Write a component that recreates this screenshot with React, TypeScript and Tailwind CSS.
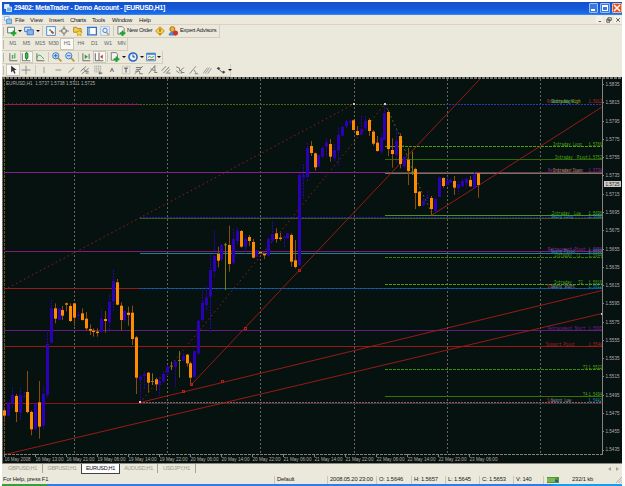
import type { ReactNode } from 'react';
import clsx from 'clsx';

type Bar = [number, number, number, number, ('o' | 'b' | 'y')];

// body top, body bottom, wick top, wick bottom (in thirds of a pixel), colour
const lower: Bar[] = [
  [421, 437, 413, 455, 'o'], [397, 437, 397, 443, 'b'], [375, 400, 352, 412, 'b'], [378, 426, 372, 456, 'o'],
  [375, 428, 353, 450, 'b'], [379, 382, 366, 384, 'b'], [366, 426, 303, 430, 'o'], [426, 478, 422, 496, 'o'],
  [402, 478, 400, 480, 'b'], [397, 470, 333, 506, 'o'], [372, 467, 350, 478, 'b'], [222, 375, 178, 383, 'b'],
  [115, 218, 88, 222, 'b'], [115, 146, 100, 160, 'o'], [115, 150, 115, 150, 'b'], [120, 137, 108, 150, 'o'],
  [100, 104, 98, 124, 'o'], [108, 153, 100, 156, 'o'], [100, 143, 98, 168, 'o'], [134, 138, 125, 150, 'b'],
  [130, 150, 115, 152, 'o'], [146, 175, 126, 182, 'o'], [177, 182, 163, 195, 'o'], [182, 186, 175, 200, 'o'],
  [185, 189, 175, 200, 'o'], [146, 185, 118, 190, 'b'], [147, 153, 123, 188, 'o'], [95, 156, 75, 185, 'b'],
  [33, 95, 0, 125, 'b'], [37, 104, 27, 106, 'o'], [107, 150, 97, 182, 'o'], [122, 150, 122, 154, 'b'],
  [128, 135, 110, 167, 'o'], [128, 207, 107, 225, 'o'], [202, 323, 198, 372, 'o'], [320, 330, 315, 395, 'b'],
  [312, 318, 305, 360, 'b'], [308, 338, 306, 368, 'o'], [333, 336, 310, 345, 'y'], [328, 343, 323, 362, 'o'],
  [333, 345, 320, 378, 'b'], [312, 335, 305, 340, 'b'], [290, 308, 285, 320, 'b'], [287, 290, 275, 300, 'y'],
  [275, 290, 272, 350, 'b'], [270, 273, 243, 323, 'y'], [257, 272, 250, 273, 'b'], [254, 280, 252, 290, 'o'],
  [280, 323, 275, 348, 'o'], [243, 322, 243, 322, 'b'], [153, 250, 148, 255, 'b'], [98, 150, 62, 155, 'b'],
  [83, 105, 50, 123, 'b'], [0, 80, -45, 188, 'b'],
];
const upper: Bar[] = [
  [543, 590, 467, 607, 'b'], [537, 557, 515, 577, 'o'], [510, 553, 507, 556, 'b'], [508, 511, 503, 645, 'y'],
  [510, 567, 452, 590, 'o'], [492, 563, 462, 568, 'b'], [467, 498, 457, 508, 'b'], [468, 515, 465, 518, 'o'],
  [492, 515, 480, 535, 'b'], [486, 498, 480, 513, 'o'], [501, 548, 492, 550, 'o'], [527, 545, 525, 547, 'b'],
  [531, 534, 528, 536, 'o'], [537, 541, 533, 552, 'o'], [492, 542, 488, 544, 'b'], [477, 497, 440, 500, 'b'],
  [475, 492, 460, 503, 'o'], [488, 492, 473, 497, 'o'], [486, 489, 483, 517, 'b'], [475, 490, 473, 492, 'b'],
  [480, 560, 475, 575, 'o'], [556, 576, 495, 580, 'o'], [300, 570, 296, 575, 'b'], [300, 308, 267, 370, 'b'],
  [219, 306, 204, 318, 'b'], [213, 234, 198, 243, 'o'], [235, 277, 233, 287, 'o'], [240, 275, 240, 275, 'b'],
  [218, 245, 215, 250, 'b'], [202, 215, 190, 245, 'b'], [207, 245, 192, 260, 'o'], [225, 250, 207, 258, 'b'],
  [180, 227, 158, 272, 'b'], [156, 182, 153, 183, 'b'], [139, 154, 135, 158, 'b'], [139, 143, 135, 153, 'b'],
  [136, 165, 134, 166, 'o'], [168, 180, 153, 182, 'o'], [163, 178, 123, 180, 'b'], [138, 160, 123, 165, 'b'],
  [135, 168, 130, 183, 'o'], [170, 206, 165, 212, 'o'], [203, 228, 183, 230, 'o'], [189, 230, 175, 238, 'b'],
  [114, 195, 88, 197, 'b'], [111, 222, 105, 243, 'o'], [225, 237, 190, 278, 'o'], [198, 240, 165, 260, 'b'],
  [183, 267, 175, 280, 'o'], [246, 275, 246, 277, 'b'], [254, 288, 218, 330, 'o'], [290, 293, 230, 300, 'y'],
  [282, 354, 278, 402, 'o'], [350, 393, 348, 395, 'o'], [377, 390, 370, 393, 'b'], [365, 370, 348, 378, 'b'],
  [369, 402, 363, 422, 'o'], [372, 408, 370, 410, 'b'], [307, 366, 305, 368, 'b'], [309, 333, 307, 338, 'o'],
  [318, 330, 305, 335, 'b'], [314, 322, 312, 324, 'b'], [318, 338, 303, 360, 'o'], [327, 340, 318, 357, 'b'],
  [318, 333, 312, 336, 'b'], [312, 325, 308, 338, 'b'], [315, 334, 303, 336, 'o'], [298, 338, 290, 342, 'b'],
  [295, 330, 295, 368, 'o'],
];
const shift = (rows: Bar[], base: number) =>
  rows.map(([a, b, c, d, k]) => [base + a / 3, base + b / 3, base + c / 3, base + d / 3, k] as Bar);
const bars = [...shift(lower, 270), ...shift(upper, 75)];

const fills = { o: '#ff8c00', b: '#2c00b4', y: '#a07a10' };
const wicks = { o: '#8c4c08', b: '#2c00b4', y: '#7c7410' };

// x from, x to, y, colour, dash
const levels: [number, number, number, string, string?][] = [
  [4, 140, 104, '#96203f'], [4, 140, 103, '#551a70', '1 3'],
  [140, 446, 104, '#4c6414', '2 1'], [446, 602, 104, '#2c3cb0', '2 1'],
  [4, 602, 172, '#8a1c96'], [385, 602, 173, '#589018'],
  [385, 602, 146, '#46a00c', '3 1'], [385, 602, 159, '#2f6a00'],
  [140, 602, 218, '#39551c'], [140, 602, 217, '#2a1cb0', '2 1'], [385, 602, 215, '#48960c'],
  [4, 602, 251, '#861a78'], [140, 602, 253, '#267c9c'], [385, 602, 257, '#3c7c06', '3 1'],
  [385, 602, 284, '#46a00c', '3 1'],
  [4, 140, 288, '#981c1c'], [140, 602, 288, '#0c4cc8'], [140, 602, 288, '#17802c', '1 3'],
  [4, 602, 330, '#661a80'], [4, 602, 346, '#981818'],
  [385, 602, 369, '#3f8c06', '3 1'], [385, 602, 396, '#387404'],
  [4, 602, 403, '#8c1414'], [140, 602, 402, '#14909a', '2 1'],
];

// y, start x, name, price, colour
const tags: [number, number, string, string, string][] = [
  [104, 547, 'Resistance High', '1.5812', '#c02828'],
  [104, 551, 'Swing High', '', '#2898b8'],
  [104, 552, 'Intraday High', '', '#54b414'],
  [147, 553, 'Intraday Long', '1.5766', '#54b414'],
  [160, 555, 'Intraday  Pivot', '1.5752', '#54b414'],
  [173, 548, 'Retracement Long', '1.5738', '#9c24a8'],
  [173, 553, 'Intraday Down', '', '#8c9434'],
  [216, 552, 'Intraday  Low', '1.5696', '#54b414'],
  [219, 551, 'Swing Long', '1.5690', '#2898b8'],
  [252, 548, 'Retracement Pivot', '1.5650', '#9c24a8'],
  [254, 551, 'Swing Pivot', '1.5650', '#2898b8'],
  [258, 554, 'Intraday  T1', '1.5644', '#48980e'],
  [285, 554, 'Intraday   T2', '1.5616', '#54b414'],
  [289, 547, 'Support High', '', '#c02828'],
  [289, 551, 'Swing Short', '1.5612', '#2898b8'],
  [331, 548, 'Retracement Short', '1.5565', '#7c2090'],
  [347, 546, 'Support Pivot', '1.5548', '#b82020'],
  [370, 583, 'T3', '1.5522', '#54b414'],
  [397, 583, 'T4', '1.5494', '#54b414'],
  [403, 547, 'Support Low', '', '#c02828'],
  [403, 551, 'Swing Low', '1.5482', '#2898b8'],
];

const times = [
  '16 May 2008', '16 May 13:00', '16 May 21:00', '19 May 06:00', '19 May 14:00', '19 May 22:00', '20 May 06:00', '20 May 14:00',
  '20 May 22:00', '21 May 06:00', '21 May 14:00', '21 May 22:00', '22 May 06:00', '22 May 14:00', '22 May 22:00', '23 May 06:00',
];
const prices = Array.from({ length: 21 }, (_, i) => (1.5835 - i * 0.002).toFixed(4));

function Chart() {
  return (
    <svg width="620" height="386" viewBox="2 77 620 386" className="block bg-[#05120f] font-['Liberation_Sans',sans-serif]">
      <path d="M2 78h620" stroke="#77736c" strokeWidth="2" strokeDasharray="3 1" />
      <path d="M2.5 77v386" stroke="#77736c" />
      {[4, 74, 167, 260, 354, 447, 540].map((x) => (
        <path key={x} d={`M${x + 0.5} 79V454`} stroke={x === 4 ? '#6c5420' : '#6a635d'} strokeDasharray={x === 4 ? '3 1' : '2 2'} />
      ))}
      {levels.map(([x1, x2, y, c, dash], i) => (
        <path key={i} d={`M${x1} ${y + 0.5}H${x2}`} stroke={c} strokeDasharray={dash} />
      ))}
      <g fill="none" stroke="#a81c18" strokeWidth="0.9">
        <path d="M4 290L354 104M140 403L385 104" strokeDasharray="1.5 3" />
        <path d="M191 385L480 79M432 215L602 107M140 402.5L602 290.5M5 454.5L602 313.5" />
      </g>
      <path d="M385 104L399 134L415 177L432 214" fill="none" stroke="#4c8414" strokeDasharray="1.5 3" />
      {bars.map(([t, b, wt, wb, k], i) => {
        const x = Math.round(4.2 + i * 3.88);
        return (
          <g key={i}>
            <path d={`M${x + 0.5} ${wt}V${wb}`} stroke={wicks[k]} strokeDasharray={k === 'b' ? '2 1' : undefined} />
            <rect x={x - 1} y={t} width="3" height={Math.max(1, b - t)} fill={fills[k]} />
          </g>
        );
      })}
      <g fill="none" stroke="#b42018">
        {[[299, 271], [245, 329], [191, 385], [183, 392], [222, 382]].map(([x, y]) => (
          <rect key={x} x={x - 0.5} y={y - 1.5} width="2" height="2" />
        ))}
      </g>
      {[[353, 103], [384, 103], [139, 401], [601, 313]].map(([x, y]) => (
        <rect key={x} x={x} y={y} width="2" height="2" fill="#d8c8c8" />
      ))}
      {tags.map(([y, x, name, price, c], i) => (
        <g key={i} fill={c} fontSize="5" className="font-['Liberation_Mono',monospace]">
          <text x={x} y={y - 1.2} textLength={name.length * 2.2} lengthAdjust="spacingAndGlyphs" className="whitespace-pre">{name}</text>
          {price && <text x="588.5" y={y - 1.2} textLength="13.5" lengthAdjust="spacingAndGlyphs">{price}</text>}
        </g>
      ))}
      <path d="M4 454.5H602" stroke="#8a8072" strokeDasharray="3 1" />
      <path d="M602.5 79V455" stroke="#8a7f82" />
      <g fill="#b8acae" fontSize="5.2">
        <text x="6" y="85" textLength="89" lengthAdjust="spacingAndGlyphs" className="whitespace-pre">EURUSD,H1  1.5737 1.5738 1.5711 1.5725</text>
        {prices.map((p, i) => {
          const y = 84 + i * 18.28;
          return (
            <g key={p}>
              <path d={`M602 ${Math.round(y) + 0.5}h2`} stroke="#8a7f82" />
              {i < 20 && <text x="605.5" y={y + 2} textLength="14" lengthAdjust="spacingAndGlyphs">{p}</text>}
              {i === 20 && <text x="605.5" y={y + 1.5} textLength="14" lengthAdjust="spacingAndGlyphs">{p}</text>}
            </g>
          );
        })}
        {times.map((t, i) => (
          <g key={t}>
            <path d={`M${Math.round(4 + i * 31)}.5 454v3`} stroke="#8a7f82" />
            <text x={4.5 + i * 31} y="461.2" textLength={i ? 28 : 26} lengthAdjust="spacingAndGlyphs">{t}</text>
          </g>
        ))}
      </g>
      <rect x="604" y="181" width="17" height="6" fill="#cfcac8" />
      <text x="605.5" y="186" fontSize="5" fill="#222" textLength="14" lengthAdjust="spacingAndGlyphs">1.5725</text>
    </svg>
  );
}

function Icon({ children, size = 'w-[10px] h-[10px]' }: { children: ReactNode; size?: string }) {
  return (
    <svg viewBox="0 0 16 16" className={clsx('shrink-0', size)} fill="none" strokeWidth="1.5">
      {children}
    </svg>
  );
}

function Slot({ w = 'w-[13.6px]', pressed, children }: { w?: string; pressed?: boolean; children?: ReactNode }) {
  return (
    <span className={clsx('h-[12px] shrink-0 flex items-center justify-center', w, pressed && 'bg-[#faf9f5] border border-[#cbc7bb]')}>
      {children}
    </span>
  );
}

const Sep = ({ w = 'w-[3px]' }: { w?: string }) => (
  <span className={clsx('flex justify-center shrink-0', w)}><span className="w-px h-[10px] bg-[#cdc8b9]" /></span>
);

const Caret = ({ w = 'w-[5px]' }: { w?: string }) => (
  <span className={clsx('flex justify-center shrink-0', w)}>
    <svg viewBox="0 0 4 2" className="w-[4px] h-[2px]"><path d="M0 0h4L2 2z" fill="#111" /></svg>
  </span>
);

function Strip({ w, children }: { w: string; children: ReactNode }) {
  return (
    <div className={clsx('h-[13px] flex items-center border-r border-b border-[#d8cdb8] pl-[1px]', w)}>
      <span className="w-px h-[9px] bg-[#bdb8aa] mr-[2px] shrink-0" />
      {children}
    </div>
  );
}

const plus = 'M9 7h3v3h3v3h-3v3H9v-3H6v-3h3z';

function Toolbars() {
  return (
    <div className="h-[52px] flex flex-col text-[6px] text-[#222]">
      <Strip w="w-[218px]">
        <Slot w="w-[11px]"><Icon><path d="M1 2h11v9H1z" fill="#fff" stroke="#4b7a66" /><path d={plus} fill="#16a42c" /></Icon></Slot>
        <Caret w="w-[6px]" />
        <Slot w="w-[12px]"><Icon><path d="M1 2h10v7H1z" fill="#dceafc" stroke="#3e76c4" /><path d="M5 6h10v8H5z" fill="#86b4ee" stroke="#3e76c4" /></Icon></Slot>
        <Caret w="w-[5px]" />
        <Sep w="w-[4px]" />
        <Slot><Icon><path d="M1 1h14v14H1z" fill="#f4faff" stroke="#4a8cd0" /><path d="M4 7l3-3 1 4z" fill="#20a040" /><path d="M8 8l4 4" stroke="#d04030" strokeWidth="3" /></Icon></Slot>
        <Slot><Icon><circle cx="8" cy="8" r="4" stroke="#777" /><path d="M8 0v6M8 10v6M0 8h6M10 8h6" stroke="#777" /></Icon></Slot>
        <Slot><Icon><path d="M1 2h5l1 2h6v6H1z" fill="#f4cc50" stroke="#b48a20" /><path d="M10 6l1.500 3 3.500.5-2.500 2.500.5 3.500-3-1.500-3 1.500.5-3.500L5 9.500 8.500 9z" fill="#f8dc38" stroke="#b48a20" strokeWidth="1" /></Icon></Slot>
        <Slot><Icon><path d="M1 2h14v12H1z" fill="#fff" stroke="#2c70c8" strokeWidth="2" /><path d="M1 3h4v10H1z" fill="#7caee8" /></Icon></Slot>
        <Slot><Icon><path d="M1 1h14v14H1z" fill="#e8f0fa" stroke="#a8c4e4" /><circle cx="8" cy="7" r="3.5" stroke="#4a7cb8" /><path d="M10 10l4 4" stroke="#c09040" strokeWidth="2" /></Icon></Slot>
        <Sep w="w-[4px]" />
        <Slot w="w-[10px]"><Icon><path d="M3 1h7l3 3v9H3z" fill="#f6f6f6" stroke="#777" /><path d={plus} fill="#16a42c" /></Icon></Slot>
        <span className="w-[27px] pl-px whitespace-nowrap text-[5.8px] tracking-[-0.3px]">New Order</span>
        <Slot w="w-[14px]"><Icon><path d="M8 1l7 7-7 7-7-7z" fill="#f6d04c" stroke="#b88c1c" /><path d="M8 4v5M8 11v2" stroke="#8c5c10" strokeWidth="2" /></Icon></Slot>
        <Slot w="w-[13px]"><Icon><circle cx="7" cy="5" r="4" fill="#e8b43c" stroke="#a87018" /><path d="M1 15c0-8 12-8 12 0z" fill="#4a88d0" /><circle cx="12" cy="11" r="4" fill="#d83020" /></Icon></Slot>
        <span className="whitespace-nowrap text-[5.8px] tracking-[-0.26px]">Expert Advisors</span>
      </Strip>
      <Strip w="w-[126px]">
        {['M1', 'M5', 'M15', 'M30', 'H1', 'H4', 'D1', 'W1', 'MN'].map((t) => (
          <Slot key={t} pressed={t === 'H1'}><span className="text-[5.5px] text-[#666] tracking-[-0.2px]">{t}</span></Slot>
        ))}
      </Strip>
      <Strip w="w-[161px]">
        <Slot><Icon><path d="M3 2v12h12" stroke="#666" /><path d="M7 5v6M11 2v8M7 6h2M9 9h2" stroke="#2e9e3c" /></Icon></Slot>
        <Slot pressed><Icon><path d="M2 2v12h13" stroke="#666" /><path d="M9 0v13" stroke="#187c28" /><path d="M7 2h4v8H7z" fill="#32c84a" stroke="#187c28" /></Icon></Slot>
        <Slot><Icon><path d="M3 2v12h12" stroke="#666" /><path d="M3 9c3-7 6-4 11 2" stroke="#2e9e3c" /></Icon></Slot>
        <Sep w="w-[4px]" />
        <Slot w="w-[12.6px]"><Icon><path d="M9.500 9.500L15 15" stroke="#c49434" strokeWidth="3" /><circle cx="6" cy="6" r="5" fill="#cce4fc" stroke="#3474c4" /><path d="M3 6h6M6 3v6" stroke="#2464b4" /></Icon></Slot>
        <Slot><Icon><path d="M9.500 9.500L15 15" stroke="#c49434" strokeWidth="3" /><circle cx="6" cy="6" r="5" fill="#cce4fc" stroke="#3474c4" /><path d="M3 6h6" stroke="#2464b4" /></Icon></Slot>
        <Sep w="w-[3px]" />
        <Slot w="w-[12.6px]"><Icon><path d="M3 2v12h12M13 3v8" stroke="#666" /><path d="M6 4l5 3.500L6 11z" fill="#20a038" /></Icon></Slot>
        <Slot pressed><Icon><path d="M2 2v12h13M8 1v12" stroke="#555" /><path d="M14 4l-4 3.500 4 3.500z" fill="#b83c2c" /></Icon></Slot>
        <Sep w="w-[3px]" />
        <Slot w="w-[12px]"><Icon><path d="M2 1h8l2 3v9H2z" fill="#f4f4f4" stroke="#777" /><path d={plus} fill="#16a42c" /></Icon></Slot>
        <Caret />
        <Slot><Icon><circle cx="8" cy="8" r="6.5" fill="#e6f2ff" stroke="#2468c8" strokeWidth="2.5" /><path d="M8 4v4h3" stroke="#234" /></Icon></Slot>
        <Caret />
        <Slot w="w-[12px]"><Icon><path d="M1 2h14v12H1z" fill="#e8f2fc" stroke="#4a84c4" /><path d="M1 3h14" stroke="#4a84c4" strokeWidth="3" /><path d="M3 9l3-2 3 2 4-2" stroke="#3aa048" /><path d="M3 12h10" stroke="#c06030" /></Icon></Slot>
        <Caret />
      </Strip>
      <Strip w="w-[229px]">
        <Slot pressed><Icon><path d="M5 1v11l3-3 2 5 2-1-2-5h4z" fill="#333" /></Icon></Slot>
        <Slot><Icon><path d="M8 1v14M1 8h14" stroke="#888" /></Icon></Slot>
        <Sep w="w-[4px]" />
        <Slot><Icon><path d="M8 3v10" stroke="#999" /></Icon></Slot>
        <Slot><Icon><path d="M4 8h9" stroke="#888" /></Icon></Slot>
        <Slot><Icon><path d="M4 12L13 4" stroke="#888" /></Icon></Slot>
        <Slot><Icon><path d="M1 10l9-8M3 14l11-9M5 5l6 7M9 10h5M9 13h5" stroke="#777" /></Icon></Slot>
        <Slot><Icon><path d="M2 2h12M2 5h12M2 8h12M2 11h7" stroke="#999" strokeDasharray="2 1" /><path d="M11 10v5M9 13h6" stroke="#555" /></Icon></Slot>
        <Slot><span className="font-bold text-[6px] text-[#666]">A</span></Slot>
        <Slot><Icon><path d="M2 2h12v12H2z" stroke="#aaa" strokeDasharray="1 1" /><path d="M5 5h6M8 5v7" stroke="#444" /></Icon></Slot>
        <Slot><Icon><path d="M1 14L14 2M3 4h9M3 7h8M2 10h7M9 10v4h5" stroke="#777" /></Icon></Slot>
        <Slot><Icon><path d="M1 14L11 1v9M4 6l8 4M10 12h5" stroke="#777" /></Icon></Slot>
        <Slot><Icon><path d="M1 9l7-7M4 13l9-10M8 14l6-7M10 13h5" stroke="#777" /></Icon></Slot>
        <Slot><Icon><path d="M2 3l5 2 1 5 6-6M2 9l5 4M10 12h5M10 9v5" stroke="#777" /></Icon></Slot>
        <Slot><Icon><path d="M1 14L11 2M8 8l4 6M9 14h6" stroke="#888" /></Icon></Slot>
        <Slot><Icon><path d="M2 13l7-9M5 14l7-10M9 14l6-9" stroke="#999" /></Icon></Slot>
        <Slot w="w-[14px]"><Icon><path d="M1 5l3-2 3 2-3 3zM9 11l3-2 3 2-3 3z" fill="#444" /><path d="M5 7l4 4" stroke="#444" /></Icon></Slot>
        <Caret w="w-[4px]" />
      </Strip>
    </div>
  );
}

const tabs = [
  { name: 'GBPUSD,H1', w: 'w-[41px] pl-[1px]' },
  { name: 'GBPUSD,H1', w: 'w-[38px]' },
  { name: 'EURUSD,H1', w: 'w-[39px]', active: true },
  { name: 'AUDUSD,H1', w: 'w-[38px]' },
  { name: 'USDJPY,H1', w: 'w-[38px]' },
];

const cells = [
  { text: 'Default', w: 'w-[53px]' },
  { text: '2008.05.20 23:00', w: 'w-[49px]' },
  { text: 'O: 1.5646', w: 'w-[35px]' },
  { text: 'H: 1.5657', w: 'w-[34px]' },
  { text: 'L: 1.5645', w: 'w-[34px]' },
  { text: 'C: 1.5653', w: 'w-[34px]' },
  { text: 'V: 140', w: 'w-[30px]' },
];

export default function App() {
  return (
    <div className="w-[625px] h-[486px] bg-white overflow-hidden pt-[2px] pl-[2px] font-['Liberation_Sans',sans-serif] leading-none">
      <div className="w-[620px] h-[484px] flex flex-col bg-[#ebe9dc]">
        <div className="h-[13px] shrink-0 flex items-center pl-[2px] bg-linear-to-b from-[#1650cc] via-[#1557d6] to-[#1a70f0] border-b border-[#3c84e4]">
          <Icon size="w-[8px] h-[8px]"><path d="M1 1h9v8H1z" fill="#dce8fc" stroke="#fff" /><path d="M5 6h10v9H5z" fill="#6cb0e8" stroke="#fff" /></Icon>
          <span className="ml-[2px] text-[6.8px] font-bold text-white whitespace-pre tracking-[-0.26px]">29402: MetaTrader - Demo Account - [EURUSD,H1]</span>
          <div className="ml-auto flex gap-[2px]">
            <span className="w-[9px] h-[10px] rounded-[1px] border border-[#9cc0f4] bg-[#3c78e0] flex items-end p-px"><span className="w-[4px] h-[2px] bg-white" /></span>
            <span className="w-[10px] h-[10px] rounded-[1px] border border-[#9cc0f4] bg-[#3c78e0] flex items-center justify-center"><span className="w-[6px] h-[6px] border border-t-2 border-white" /></span>
            <span className="w-[10px] h-[10px] rounded-[1px] border border-[#f0b8a0] bg-[#e0541c] flex items-center justify-center"><Icon size="w-[8px] h-[8px]"><path d="M2 2l12 12M14 2L2 14" stroke="#fff" strokeWidth="3" /></Icon></span>
          </div>
        </div>
        <div className="h-[10px] shrink-0 flex items-center pl-[2px] text-[6px] text-[#222] border-b border-[#e2cdc0]">
          <Icon size="w-[8px] h-[8px]"><path d="M1 1h9v8H1z" fill="#fff" stroke="#78a8dc" /><path d="M5 6h10v9H5z" fill="#94c4ec" stroke="#4c88cc" /></Icon>
          <span className="w-[16px] pl-[3px]">File</span>
          <span className="w-[18px] pl-[2px]">View</span>
          <span className="w-[21px] pl-[3px]">Insert</span>
          <span className="w-[22px] pl-[3px] tracking-[-0.3px]">Charts</span>
          <span className="w-[21px] pl-[3px] tracking-[-0.2px]">Tools</span>
          <span className="w-[26px] pl-[2px] tracking-[-0.2px]">Window</span>
          <span className="pl-[3px] tracking-[-0.2px]">Help</span>
          <div className="ml-auto flex gap-[2px] pr-px">
            {['M4 12h7', 'M5 2h9v7H5zM2 6h8v8H2z', 'M3 3l10 10M13 3L3 13'].map((d) => (
              <span key={d} className="w-[7px] h-[7px] bg-[#f4f2ea] flex items-center justify-center"><Icon size="w-[6px] h-[6px]"><path d={d} stroke="#555" strokeWidth="2.5" /></Icon></span>
            ))}
          </div>
        </div>
        <div className="h-[52px] shrink-0"><Toolbars /></div>
        <div className="h-[386px] shrink-0"><Chart /></div>
        <div className="h-[12px] shrink-0 flex items-start border-t border-[#8c8880] text-[5.5px] text-[#a09c90]">
          {tabs.map((t, i) => (
            <span
              key={i}
              className={clsx(
                'flex items-center justify-center tracking-[-0.3px]',
                t.w,
                t.active ? 'h-[10px] bg-white border border-t-0 border-[#444] text-[#111]' : 'h-[9px]',
                i !== 1 && !t.active && 'border-r border-[#a8a498]',
              )}
            >
              {t.name}
            </span>
          ))}
          <span className="ml-auto mt-[3px] mr-[3px] flex gap-[5px]">
            <svg viewBox="0 0 3 4" className="w-[3px] h-[4px]"><path d="M3 0v4L0 2z" fill="#aaa698" /></svg>
            <svg viewBox="0 0 3 4" className="w-[3px] h-[4px]"><path d="M0 0v4l3-2z" fill="#aaa698" /></svg>
          </span>
        </div>
        <div className="h-[9px] shrink-0 flex items-center text-[5.8px] text-[#222] tracking-[-0.15px]">
          <span className="w-[272px] pl-px">For Help, press F1</span>
          {cells.map((c) => (
            <span key={c.text} className={clsx('h-[8px] flex items-center pl-[2px] border-l border-[#cfc4b0] whitespace-nowrap shrink-0', c.w)}>{c.text}</span>
          ))}
          <span className="w-[26px] h-[8px] flex items-center pl-[3px] border-l border-[#cfc4b0]">
            <svg viewBox="0 0 12 6" className="w-[12px] h-[6px]"><path d="M0 0h12v6H0z" fill="#4c9440" /><path d="M1 1v4M3 1v4M5 1v4M7 1v4" stroke="#a8dc60" /><path d="M8 3h3v2H8z" fill="#2c5ca0" /></svg>
          </span>
          <span className="pl-[3px]">232/1 kb</span>
          <svg viewBox="0 0 8 8" className="w-[7px] h-[7px] ml-auto"><path d="M1 8l7-7M4 8l4-4M7 8l1-1" stroke="#aaa698" /></svg>
        </div>
        <div className="h-[2px] shrink-0 flex bg-[#2f7ce4]">
          <span className="w-[45px] bg-[#3c9c3c]" />
          <span className="ml-auto w-[69px] bg-[#189cec]" />
        </div>
      </div>
    </div>
  );
}
